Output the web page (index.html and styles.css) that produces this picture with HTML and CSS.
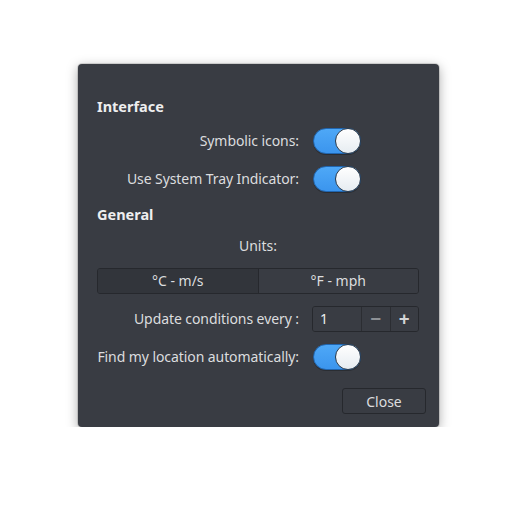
FILE: index.html
```html
<!DOCTYPE html>
<html>
<head>
<meta charset="utf-8">
<link rel="stylesheet" href="styles.css">
</head>
<body>
<div class="dialog">
  <div class="heading">Interface</div>
  <div class="row">
    <span class="label">Symbolic icons:</span>
    <span class="switch"><span class="knob"></span></span>
  </div>
  <div class="row">
    <span class="label">Use System Tray Indicator:</span>
    <span class="switch"><span class="knob"></span></span>
  </div>
  <div class="heading">General</div>
  <div class="units">Units:</div>
  <div class="segmented">
    <button class="seg active">°C - m/s</button>
    <button class="seg">°F - mph</button>
  </div>
  <div class="row">
    <span class="label">Update conditions every :</span>
    <span class="spin">
      <span class="spin-entry">1</span>
      <span class="spin-btn dim">−</span>
      <span class="spin-btn">+</span>
    </span>
  </div>
  <div class="row">
    <span class="label">Find my location automatically:</span>
    <span class="switch"><span class="knob"></span></span>
  </div>
  <div class="footer">
    <button class="close">Close</button>
  </div>
</div>
</body>
</html>
```
FILE: styles.css
```css
html, body {
  margin: 0;
  padding: 0;
  background: #ffffff;
}
body {
  padding-top: 64px;
  font-family: "Noto Sans", "Open Sans", sans-serif;
  font-size: 14px;
  color: #dcdddf;
}
.dialog {
  box-sizing: border-box;
  width: 361px;
  height: 363px;
  margin: 0 auto;
  background: #393c43;
  border-radius: 4px;
  box-shadow: 0 3px 12px rgba(0,0,0,0.35), 0 0 0 1px rgba(0,0,0,0.12);
  padding: 32px 20px 12px 19px;
  display: flex;
  flex-direction: column;
  gap: 12px;
}
.heading {
  font-weight: bold;
  font-size: 14.5px;
  line-height: 20px;
  color: #eeeeef;
}
.row {
  display: grid;
  grid-template-columns: minmax(0, 1fr) 107px;
  column-gap: 13px;
  align-items: center;
  height: 26px;
}
.label {
  text-align: right;
  white-space: nowrap;
  line-height: 20px;
  letter-spacing: -0.08px;
}
.switch {
  position: relative;
  box-sizing: border-box;
  width: 48px;
  height: 26px;
  margin-left: 1px;
  border-radius: 13px;
  background: linear-gradient(#4ea8f7, #3b95ee);
  border: 1px solid #2166b0;
  box-shadow: 0 1px 0 rgba(0,0,0,0.25);
}
.knob {
  position: absolute;
  right: -1px;
  top: -1px;
  box-sizing: border-box;
  width: 26px;
  height: 26px;
  border-radius: 50%;
  background: linear-gradient(#ffffff, #e6ecf1);
  border: 1px solid #2b3a4a;
}
.units {
  text-align: center;
  line-height: 20px;
}
.segmented {
  display: flex;
  height: 26px;
  border: 1px solid #26282d;
  border-radius: 3px;
  overflow: hidden;
  box-sizing: border-box;
}
.seg {
  flex: 1;
  font: inherit;
  color: #dcdddf;
  border: 0;
  background: #393c43;
  padding: 0;
  line-height: 24px;
}
.seg.active {
  background: #32353b;
  border-right: 1px solid #26282d;
}
.spin {
  display: flex;
  box-sizing: border-box;
  height: 26px;
  border: 1px solid #26282d;
  border-radius: 3px;
  overflow: hidden;
}
.spin-entry {
  width: 49px;
  padding-left: 7px;
  box-sizing: border-box;
  line-height: 24px;
  background: #393c43;
  border-right: 1px solid #2b2d32;
  color: #eeeeef;
}
.spin-btn {
  flex: 1;
  text-align: center;
  line-height: 24px;
  font-size: 19px;
  font-weight: bold;
  color: #d4d5d7;
  background: #393c43;
}
.spin-btn.dim {
  color: #8e9196;
  border-right: 1px solid #2b2d32;
}
.footer {
  display: flex;
  justify-content: flex-end;
  margin-top: 6px;
  margin-right: -7px;
}
.close {
  width: 84px;
  height: 26px;
  font: inherit;
  color: #dcdddf;
  background: #393c43;
  border: 1px solid #26282d;
  border-radius: 3px;
  padding: 0;
}
```
